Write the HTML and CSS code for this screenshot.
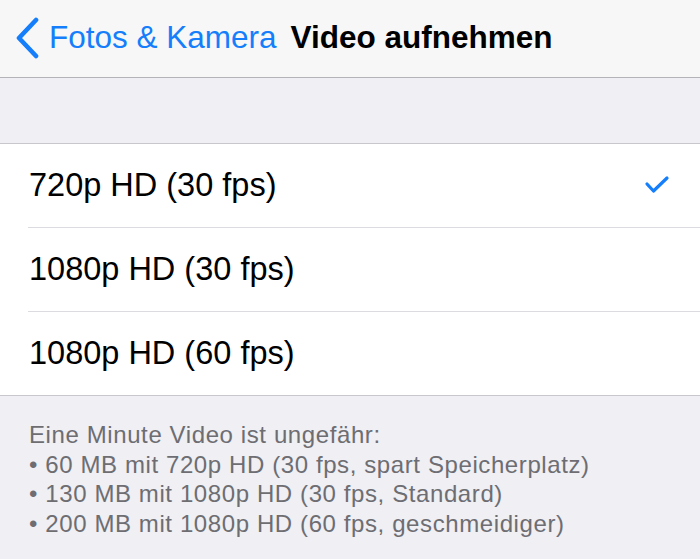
FILE: index.html
```html
<!DOCTYPE html>
<html lang="de">
<head>
  <meta charset="UTF-8">
  <meta name="viewport" content="width=device-width, initial-scale=1.0">
  <title>Video aufnehmen</title>
  <link rel="stylesheet" href="styles.css">
</head>
<body>
  <div class="navbar">
    <a class="back" href="#">
      <svg class="chevron" width="26" height="42" viewBox="0 0 26 42">
        <polyline points="22,3 5,21 22,39" fill="none" stroke="#147efb" stroke-width="4.6" stroke-linecap="round" stroke-linejoin="round"/>
      </svg>
      <span>Fotos &amp; Kamera</span>
    </a>
    <h1 class="title">Video aufnehmen</h1>
  </div>

  <div class="spacer"></div>

  <ul class="options">
    <li class="option">
      <span>720p HD (30 fps)</span>
      <svg class="check" width="26" height="20" viewBox="0 0 26 20">
        <polyline points="3,9 9.5,16 23,3" fill="none" stroke="#147efb" stroke-width="3.2" stroke-linecap="round" stroke-linejoin="round"/>
      </svg>
    </li>
    <li class="option"><span>1080p HD (30 fps)</span></li>
    <li class="option"><span>1080p HD (60 fps)</span></li>
  </ul>

  <div class="footer">
    <p>Eine Minute Video ist ungefähr:</p>
    <p>• 60 MB mit 720p HD (30 fps, spart Speicherplatz)</p>
    <p>• 130 MB mit 1080p HD (30 fps, Standard)</p>
    <p>• 200 MB mit 1080p HD (60 fps, geschmeidiger)</p>
  </div>
</body>
</html>
```

FILE: styles.css
```css
body {
  margin: 0;
  font-family: "Liberation Sans", Arial, sans-serif;
  background-color: #efeff4;
  color: #000;
  height: 559px;
  overflow: hidden;
}

.navbar {
  height: 78px;
  background-color: #f7f7f8;
  border-bottom: 1px solid #b4b4b8;
  display: flex;
  align-items: center;
  padding: 0 0 3px 14px;
  box-sizing: border-box;
}

.back {
  display: flex;
  align-items: center;
  gap: 9px;
  color: #147efb;
  text-decoration: none;
  font-size: 31.5px;
}

.chevron {
  margin-top: 2px;
}

.title {
  margin: 0 0 0 14px;
  font-size: 31.5px;
  font-weight: bold;
}

.spacer {
  height: 65px;
  border-bottom: 1px solid #c8c7cc;
}

.options {
  list-style: none;
  margin: 0;
  padding: 0 0 0 28px;
  background-color: #fff;
  border-bottom: 1px solid #c8c7cc;
}

.option {
  height: 83px;
  display: flex;
  align-items: center;
  justify-content: space-between;
  padding: 0 30px 0 1px;
  font-size: 32.5px;
  border-bottom: 1px solid #dcdce0;
}

.option:last-child {
  border-bottom: none;
}

.check {
  margin-top: -2px;
}

.footer {
  padding: 24px 0 0 29px;
  color: #6d6d72;
  font-size: 24px;
  letter-spacing: 0.6px;
}

.footer p {
  margin: 0;
  line-height: 29.5px;
}
```
